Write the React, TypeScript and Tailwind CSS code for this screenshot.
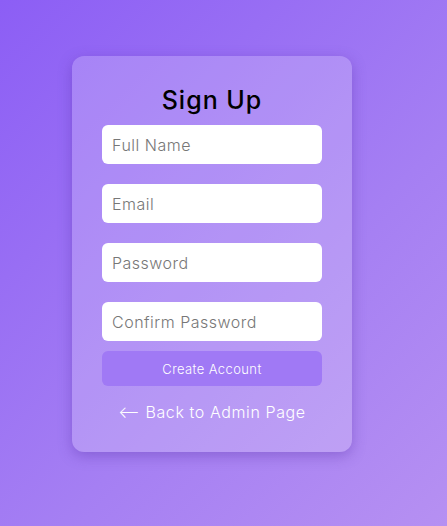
import React from "react";

export default function App() {
  const font = { fontFamily: "Inter, 'Noto Sans', sans-serif" };
  const inputCls =
    "h-[39px] w-full rounded-[6px] bg-white px-[10px] text-[16px] tracking-[0.5px] font-light text-gray-700 placeholder:text-[#777] outline-none";
  return (
    <div
      className="w-[447px] h-[526px] overflow-hidden bg-[linear-gradient(135deg,#8c5ef5_0%,#a57ff3_60%,#b690f2_100%)]"
      style={font}
    >
      <div className="pt-[56px] pl-[72px]">
        <div className="w-[280px] rounded-[12px] bg-white/20 shadow-[0_4px_14px_rgba(80,40,160,0.35)] px-[30px] pt-[28px] pb-[30px] flex flex-col">
          <h2 className="text-center text-[25px] leading-[32px] font-medium tracking-[1px] text-black mb-[9px]">Sign Up</h2>
          <input placeholder="Full Name" className={inputCls + " mb-[20px]"} />
          <input placeholder="Email" className={inputCls + " mb-[20px]"} />
          <input placeholder="Password" type="password" className={inputCls + " mb-[20px]"} />
          <input placeholder="Confirm Password" type="password" className={inputCls + " mb-[10px]"} />
          <button className="h-[35px] w-full rounded-[6px] bg-[#a079f5] text-white text-[13px] tracking-[0.4px] font-light pt-[2px]">
            Create Account
          </button>
          <a className="mt-[15px] text-center text-white text-[16px] tracking-[0.6px] font-light leading-[20px] pt-[1px]">⟵ Back to Admin Page</a>
        </div>
      </div>
    </div>
  );
}
